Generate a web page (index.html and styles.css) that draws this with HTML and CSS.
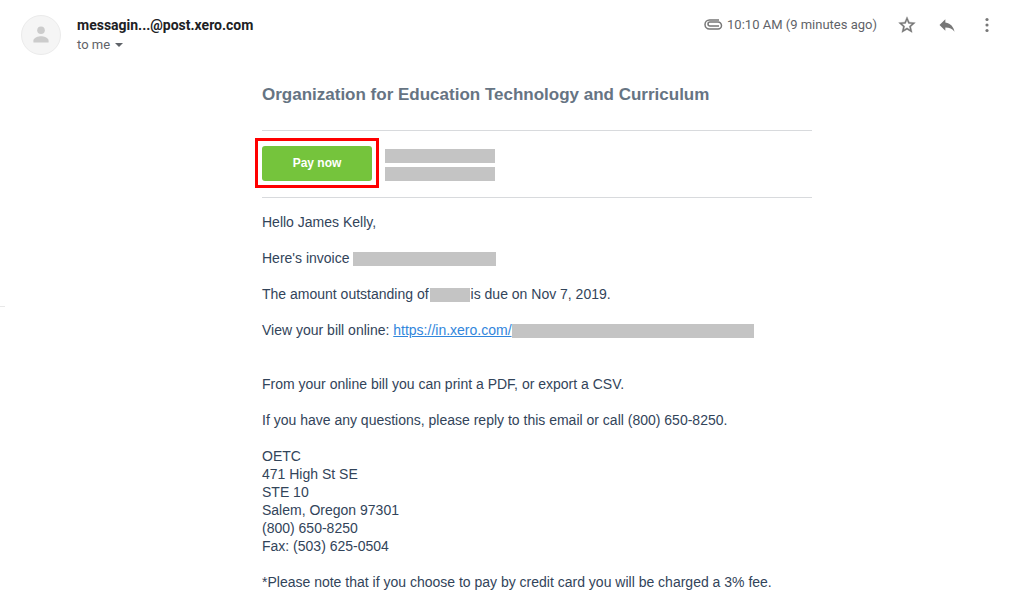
FILE: index.html
```html
<!DOCTYPE html>
<html lang="en">
<head>
<meta charset="utf-8">
<meta name="viewport" content="width=device-width, initial-scale=1">
<title>Invoice email</title>
<link rel="stylesheet" href="styles.css">
</head>
<body>
<article class="message">
  <header class="message-header">
    <span class="avatar"><svg viewBox="0 0 40 40" aria-hidden="true"><circle cx="20" cy="15" r="4"/><path d="M12 28v-2C12 22.700 17.300 21.300 20 21.300s8 1.400 8 4.700v2z"/></svg></span>
    <div class="sender">
      <h2 class="sender-name">messagin...@post.xero.com</h2>
      <button class="recipient" type="button">to me <span class="caret"></span></button>
    </div>
    <div class="meta">
      <svg class="clip" viewBox="0 0 20 20" aria-hidden="true"><path d="M5 8h9a1.500 1.500 0 0 1 0 4H6a3.500 3.500 0 0 1 0-7h8.500a4.500 4.500 0 0 1 0 9H5" transform="matrix(-1 0 0 -1 20 19)"/></svg>
      <time class="sent">10:10 AM (9 minutes ago)</time>
      <div class="actions">
        <button class="icon-button" type="button" aria-label="Star"><svg class="star" viewBox="0 0 24 24"><path d="M22 9.240l-7.190-.62L12 2 9.190 8.630 2 9.240l5.460 4.730L5.820 21 12 17.270 18.180 21l-1.630-7.030L22 9.240zM12 15.400l-3.760 2.270 1-4.280-3.320-2.880 4.380-.38L12 6.100l1.710 4.040 4.380.38-3.320 2.880 1 4.280L12 15.400z"/></svg></button>
        <button class="icon-button" type="button" aria-label="Reply"><svg viewBox="0 0 24 24"><path d="M10 9V5l-7 7 7 7v-4.100c5 0 8.500 1.600 11 5.100-1-5-4-10-11-11z"/></svg></button>
        <button class="icon-button" type="button" aria-label="More"><svg viewBox="0 0 24 24"><circle cx="12" cy="5.400" r="1.900"/><circle cx="12" cy="12" r="1.900"/><circle cx="12" cy="18.600" r="1.900"/></svg></button>
      </div>
    </div>
  </header>
  <div class="message-body">
    <div class="email">
      <h1 class="org">Organization for Education Technology and Curriculum</h1>
      <div class="pay-row">
        <div class="callout"><button class="pay" type="button">Pay now</button></div>
        <div class="summary"><span class="redacted summary-bar"></span><span class="redacted summary-bar"></span></div>
      </div>
      <p>Hello James Kelly,</p>
      <p>Here's invoice <span class="redacted invoice-number"></span></p>
      <p>The amount outstanding of<span class="redacted amount"></span>is due on Nov 7, 2019.</p>
      <p class="bill-link">View your bill online: <a href="https://in.xero.com/">https://in.xero.com/</a><span class="redacted bill-path"></span></p>
      <p>From your online bill you can print a PDF, or export a CSV.</p>
      <p>If you have any questions, please reply to this email or call (800) 650-8250.</p>
      <address>OETC<br>471 High St SE<br>STE 10<br>Salem, Oregon 97301<br>(800) 650-8250<br>Fax: (503) 625-0504</address>
      <p>*Please note that if you choose to pay by credit card you will be charged a 3% fee.</p>
    </div>
  </div>
</article>
</body>
</html>
```
FILE: styles.css
```css
* { box-sizing: border-box; }
body { margin: 0; background: #fff; font-family: Roboto, "Liberation Sans", sans-serif; }
button { border: 0; padding: 0; background: none; font-family: inherit; cursor: pointer; }
/* Edge of the collapsed side panel */
.message::before { content: ""; position: fixed; top: 50%; left: 0; width: 5px; height: 1px; background: #e8e8e8; }
.message-header { display: flex; align-items: flex-start; padding: 15px 4px 0 21px; }
.avatar { width: 40px; height: 40px; border: 1px solid #ebebeb; border-radius: 50%; background: #f5f5f5; overflow: hidden; }
.avatar svg { display: block; width: 100%; fill: #ccc; }
.sender { display: flex; flex-direction: column; align-items: flex-start; margin-left: 16px; }
.sender-name { margin: 0; color: #202124; font-size: 14px; font-weight: 700; line-height: 20px; }
.recipient { display: flex; align-items: center; gap: 5px; color: #5f6368; font-size: 13px; line-height: 20px; }
.caret { border: 4px solid transparent; border-top-color: #5f6368; border-bottom: 0; }
.meta { display: flex; align-items: center; height: 20px; margin-left: auto; color: #5f6368; }
.clip { width: 20px; height: 20px; margin-right: 3px; fill: none; stroke: #777; stroke-width: 1.500; }
.sent { font-size: 13px; line-height: 20px; }
.actions { display: flex; margin-left: 10px; }
.icon-button { display: grid; place-items: center; width: 40px; height: 40px; }
.icon-button svg { width: 20px; height: 20px; fill: #777; }
.icon-button .star { stroke: #777; stroke-width: .4; }
.message-body { padding: 29px 14px 20px 77px; }
.email { max-width: 550px; margin: 0 auto; color: #32445a; font-family: "Liberation Sans", Arial, sans-serif; font-size: 14px; line-height: 18px; }
.org { margin: 0 0 24px; color: #667483; font-size: 17px; line-height: 22px; }
.pay-row { display: flex; align-items: flex-end; gap: 6px; margin-bottom: 15px; padding: 7px 0 9px; border: solid #d8dadd; border-width: 1px 0; }
.callout { margin-left: -7px; padding: 5px 4px 4px; border: 3px solid #f00; }
.pay { display: block; width: 110px; height: 35px; padding-bottom: 2px; border-radius: 3px; background: #75c43c; color: #fff; font-size: 12px; font-weight: 700; }
.summary { display: grid; gap: 4px; padding-bottom: 7px; }
.redacted { display: inline-block; height: 14px; background: #c4c4c4; vertical-align: -3px; }
.summary-bar { width: 110px; }
.invoice-number { width: 143px; }
.amount { width: 40px; margin: 0 1px; }
.bill-path { width: 242px; }
.email p, .email address { margin: 0 0 18px; font-style: normal; }
.email .bill-link { margin-bottom: 36px; }
.email a { color: #3186dc; }
```
